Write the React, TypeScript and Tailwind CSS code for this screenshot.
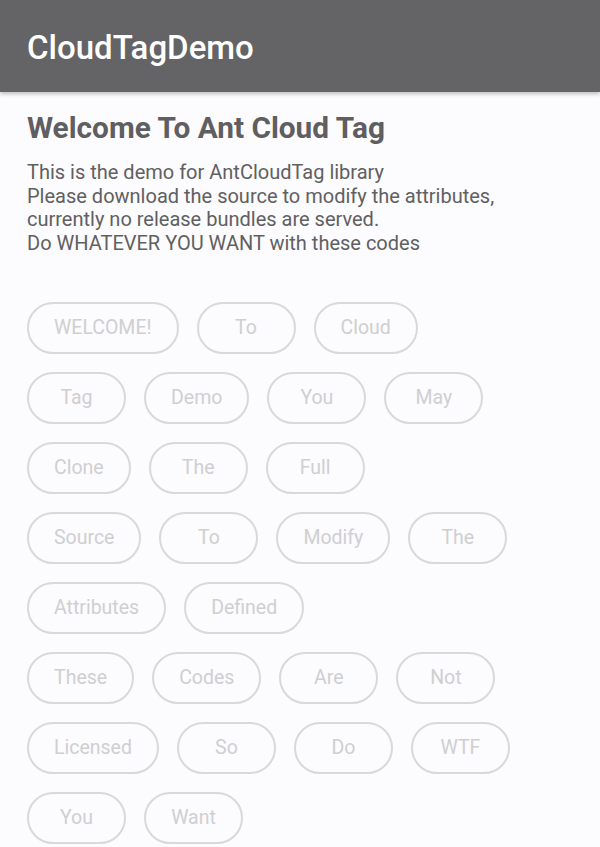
const rows: string[][] = [
  ["WELCOME!", "To", "Cloud"],
  ["Tag", "Demo", "You", "May"],
  ["Clone", "The", "Full"],
  ["Source", "To", "Modify", "The"],
  ["Attributes", "Defined"],
  ["These", "Codes", "Are", "Not"],
  ["Licensed", "So", "Do", "WTF"],
  ["You", "Want"],
];

const App = () => {
  return (
    <div className="min-h-[847px] bg-[#fcfbfd] font-['Roboto',sans-serif]">
      <header className="h-[92px] bg-[#646366] flex items-center px-[27px] shadow-[0_2px_4px_rgba(0,0,0,0.25)]">
        <h1 className="text-[33px] font-medium text-white leading-none pt-[2px]">CloudTagDemo</h1>
      </header>
      <main className="px-[27px] pt-[18px]">
        <h2 className="text-[29.8px] font-bold text-[#5f5e60] leading-[36px]">Welcome To Ant Cloud Tag</h2>
        <p className="mt-[15px] text-[20px] leading-[23.7px] text-[#606062] whitespace-nowrap">
          This is the demo for AntCloudTag library
          <br />
          Please download the source to modify the attributes,
          <br />
          currently no release bundles are served.
          <br />
          Do WHATEVER YOU WANT with these codes
        </p>
        <div className="mt-[46px] flex flex-col gap-[18px]">
          {rows.map((row, i) => (
            <div key={i} className="flex gap-[18px]">
              {row.map((t, j) => (
                <span
                  key={j}
                  className="h-[52px] min-w-[99px] px-[25px] flex items-center justify-center rounded-full border-2 border-[#d9d8da] text-[19.5px] text-[#cfcfd1]"
                >
                  {t}
                </span>
              ))}
            </div>
          ))}
        </div>
      </main>
    </div>
  );
};

export default App;
